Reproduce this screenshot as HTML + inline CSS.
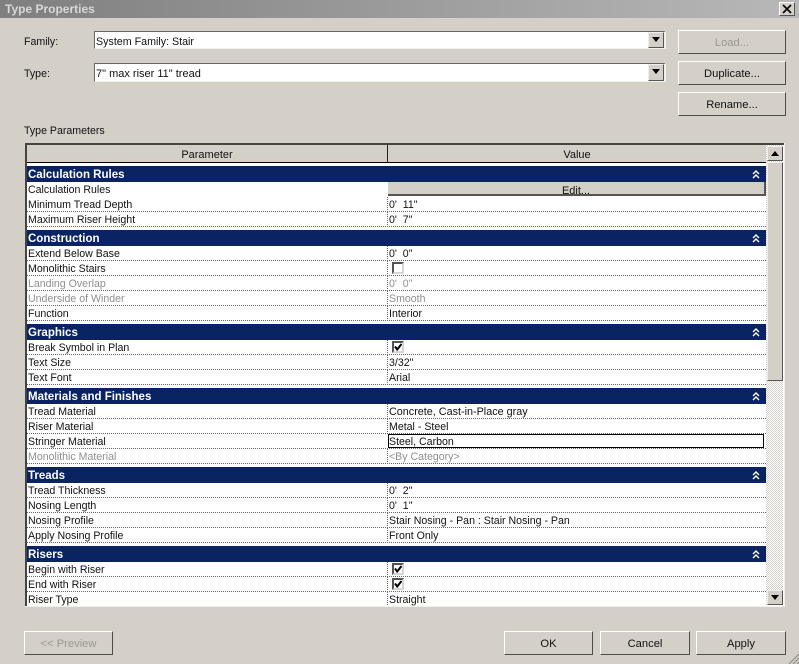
<!DOCTYPE html>
<html><head><meta charset="utf-8"><title>Type Properties</title>
<style>
html,body{margin:0;padding:0}
body{width:799px;height:664px;overflow:hidden;background:#d4d0c8;position:relative;font:10.6px "Liberation Sans",sans-serif;color:#111}
.a{position:absolute}
.title{left:0;top:0;width:799px;height:18px;background:linear-gradient(90deg,#7f7f7f,#b8b8b8);color:#d8d8d8;font-weight:bold;font-size:12px;line-height:18px;text-indent:5px}
.lbl{position:absolute;line-height:16px;white-space:nowrap}
.combo{position:absolute;left:94px;width:569px;height:16px;background:#fff;border:solid;border-width:1.5px 2px 1.5px 1.5px;border-color:#6a6860 #f2f0ea #f2f0ea #6a6860;line-height:17px;text-indent:1px}
.dd{position:absolute;right:0;top:0;width:16px;height:100%;box-sizing:border-box;background:#d4d0c8;border:1px solid;border-color:#eee #555 #555 #eee;line-height:0}
.dd:after,.dn:after{content:"";position:absolute;left:3px;top:4px;border:4px solid transparent;border-top:5px solid #000;border-bottom:0}
.btn{position:absolute;box-sizing:border-box;background:#d4d0c8;border:1.5px solid;border-color:#fff #4e4c46 #4e4c46 #fff;text-align:center;font-size:11.2px;line-height:25px;height:24px}
.dis{color:#9a9890}
.tbl{position:absolute;left:25px;top:143px;width:759px;height:464px;box-sizing:border-box;background:#fff;border-left:2px solid #45443f;border-top:2px solid #45443f;overflow:hidden}
.hd{position:absolute;top:0;height:17px;background:#d4d0c8;border-bottom:1px solid #000;text-align:center;line-height:20px;font-size:11px}
.list{position:absolute;left:0;top:21px;width:739px}
.s{height:16px;background:#0a2463;color:#fff;font-weight:bold;font-size:11.5px;line-height:18px;padding-left:1px;position:relative}
.s svg{position:absolute;left:725px;top:4px}
.r{height:14px;border-bottom:1px dotted #666;line-height:16px;position:relative;white-space:nowrap;padding-left:1px}
.r b{font-weight:normal;position:absolute;left:360px;top:0;height:15px;border-left:1px dotted #666;padding-left:1px}
.g{color:#8f8f8f}
.gap{height:3px}
.cb{position:absolute;left:4px;top:1px;width:8px;height:8px;background:#fff;border:2px solid;border-color:#55534d #d8d6d0 #d8d6d0 #55534d}
.cb svg{position:absolute;left:0;top:0}
.sb{position:absolute;left:767px;width:16px;box-sizing:border-box;background:#d4d0c8;border:1px solid;border-color:#eee #555 #555 #eee}
</style></head><body>
<div class="a title">Type Properties</div>
<div class="a" style="left:779px;top:2px;width:16px;height:14px;box-sizing:border-box;background:#d4d0c8;border:1px solid;border-color:#fff #555 #555 #fff"><svg width="14" height="12" style="position:absolute;left:0;top:0"><path d="M3 2L11 10M11 2L3 10" stroke="#000" stroke-width="1.6"/></svg></div>

<div class="lbl" style="left:24px;top:34px">Family:</div>
<div class="combo" style="top:31px;line-height:20px;font-size:10.7px">System Family: Stair<div class="dd"></div></div>
<div class="lbl" style="left:24px;top:66px">Type:</div>
<div class="combo" style="top:63px;height:17px;line-height:21px;font-size:11px">7" max riser 11" tread<div class="dd"></div></div>

<div class="btn dis" style="left:678px;top:30px;width:108px">Load...</div>
<div class="btn" style="left:678px;top:61px;width:108px">Duplicate...</div>
<div class="btn" style="left:678px;top:92px;width:108px">Rename...</div>

<div class="lbl" style="left:24px;top:123px">Type Parameters</div>

<div class="tbl">
<div class="hd" style="left:0;width:360px;border-right:1px solid #222">Parameter</div>
<div class="hd" style="left:361px;width:378px">Value</div>
<div class="list">
<div class="s">Calculation Rules<svg width="8" height="9"><path d="M1 4L4 1L7 4M1 8L4 5L7 8" fill="none" stroke="#fff" stroke-width="1.4"/></svg></div>
<div class="r" style="border-bottom-color:#fff">Calculation Rules<b style="border:0;left:361px;width:376px;height:12px;padding:0;background:#d4d0c8;border-right:2px solid #555;border-bottom:2px solid #555;text-align:center;line-height:18px;font-size:11px;overflow:hidden">Edit...</b></div>
<div class="r">Minimum Tread Depth<b>0'&nbsp; 11"</b></div>
<div class="r">Maximum Riser Height<b>0'&nbsp; 7"</b></div>
<div class="gap"></div>
<div class="s">Construction<svg width="8" height="9"><path d="M1 4L4 1L7 4M1 8L4 5L7 8" fill="none" stroke="#fff" stroke-width="1.4"/></svg></div>
<div class="r">Extend Below Base<b>0'&nbsp; 0"</b></div>
<div class="r">Monolithic Stairs<b><span class="cb"></span></b></div>
<div class="r g">Landing Overlap<b>0'&nbsp; 0"</b></div>
<div class="r g">Underside of Winder<b>Smooth</b></div>
<div class="r">Function<b>Interior</b></div>
<div class="gap"></div>
<div class="s">Graphics<svg width="8" height="9"><path d="M1 4L4 1L7 4M1 8L4 5L7 8" fill="none" stroke="#fff" stroke-width="1.4"/></svg></div>
<div class="r">Break Symbol in Plan<b><span class="cb"><svg width="8" height="8"><path d="M1 3.5L3.2 6.5L7.5 1" fill="none" stroke="#000" stroke-width="2"/></svg></span></b></div>
<div class="r">Text Size<b>3/32"</b></div>
<div class="r">Text Font<b>Arial</b></div>
<div class="gap"></div>
<div class="s">Materials and Finishes<svg width="8" height="9"><path d="M1 4L4 1L7 4M1 8L4 5L7 8" fill="none" stroke="#fff" stroke-width="1.4"/></svg></div>
<div class="r">Tread Material<b style="font-size:10.8px">Concrete, Cast-in-Place gray</b></div>
<div class="r">Riser Material<b>Metal - Steel</b></div>
<div class="r">Stringer Material<b style="left:361px;width:374px;height:12px;padding:0;border:1.5px solid #000;line-height:14px">Steel, Carbon</b></div>
<div class="r g">Monolithic Material<b>&lt;By Category&gt;</b></div>
<div class="gap"></div>
<div class="s">Treads<svg width="8" height="9"><path d="M1 4L4 1L7 4M1 8L4 5L7 8" fill="none" stroke="#fff" stroke-width="1.4"/></svg></div>
<div class="r">Tread Thickness<b>0'&nbsp; 2"</b></div>
<div class="r">Nosing Length<b>0'&nbsp; 1"</b></div>
<div class="r">Nosing Profile<b>Stair Nosing - Pan : Stair Nosing - Pan</b></div>
<div class="r">Apply Nosing Profile<b>Front Only</b></div>
<div class="gap"></div>
<div class="s">Risers<svg width="8" height="9"><path d="M1 4L4 1L7 4M1 8L4 5L7 8" fill="none" stroke="#fff" stroke-width="1.4"/></svg></div>
<div class="r">Begin with Riser<b><span class="cb"><svg width="8" height="8"><path d="M1 3.5L3.2 6.5L7.5 1" fill="none" stroke="#000" stroke-width="2"/></svg></span></b></div>
<div class="r">End with Riser<b><span class="cb"><svg width="8" height="8"><path d="M1 3.5L3.2 6.5L7.5 1" fill="none" stroke="#000" stroke-width="2"/></svg></span></b></div>
<div class="r" style="border:0">Riser Type<b>Straight</b></div>
</div>
</div>

<div class="a" style="left:766px;top:145px;width:17px;height:460px;background:conic-gradient(#d4d0c8 25%,#fff 0 50%,#d4d0c8 0 75%,#fff 0) 0 0/2px 2px"></div>
<div class="sb" style="top:146px;height:15px"><span style="position:absolute;left:3px;top:4px;width:0;height:0;border:4px solid transparent;border-bottom:5px solid #000;border-top:0"></span></div>
<div class="sb" style="top:162px;height:219px"></div>
<div class="sb dn" style="top:590px;height:15px"></div>
<div class="a" style="left:784px;top:143px;width:1px;height:464px;background:#f2f0ea"></div>
<div class="a" style="left:25px;top:606px;width:760px;height:1px;background:#f2f0ea"></div>

<div class="btn dis" style="left:24px;top:631px;width:89px">&lt;&lt; Preview</div>
<div class="btn" style="left:504px;top:631px;width:89px">OK</div>
<div class="btn" style="left:600px;top:631px;width:90px">Cancel</div>
<div class="btn" style="left:696px;top:631px;width:90px">Apply</div>
<svg class="a" style="left:788px;top:653px" width="11" height="11"><path d="M1 11L11 1M5 11L11 5M9 11L11 9" stroke="#8a887f" stroke-width="1"/></svg>
</body></html>
